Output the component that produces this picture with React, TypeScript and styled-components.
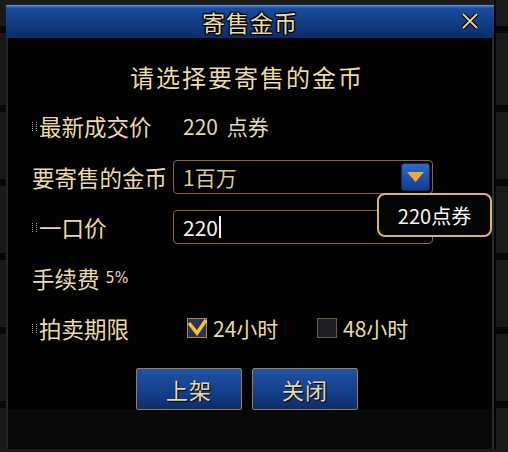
import { FC } from "react";
import styled, { createGlobalStyle } from "styled-components";

const GlobalStyle = createGlobalStyle`
	html {
		background-color: #0a0a0a;
		background-image:
			linear-gradient(to right, transparent 0 494px, #040404 494px 496px, transparent 496px),
			repeating-linear-gradient(to bottom, #1a1a1b 0 67px, #070707 67px 74px);
		background-position: 0 0, 0 38px;
		background-repeat: no-repeat, repeat;
	}
	body {
		margin: 0;
		padding: 5px 14px 0 6px;
		font-family: "Noto Sans CJK SC", "Noto Sans", sans-serif;
	}
	* {
		box-sizing: border-box;
	}
`;

const gold = "#eadaa6";

const Dialog = styled.div`
	width: 488px;
	height: 444px;
	display: flex;
	flex-direction: column;
	background: #040404;
`;

const TitleBar = styled.div`
	height: 33px;
	position: relative;
	display: flex;
	align-items: center;
	justify-content: center;
	background: linear-gradient(to bottom, #3a70c4 0, #1a4c9c 8%, #123d84 55%, #0b2c68 100%);
	border-top: 1px solid #5a8ad8;
`;

const Title = styled.h1`
	margin: 0;
	font-size: 23px;
	font-weight: 400;
	color: #ecdca4;
	letter-spacing: 1px;
	text-shadow: 0 0 2px #000, 1px 1px 1px #000, -1px -1px 1px #000, 1px -1px 1px #000,
		-1px 1px 1px #000;
`;

const Close = styled.span`
	position: absolute;
	right: 14px;
	top: 5px;
	width: 20px;
	height: 20px;
	display: flex;
	align-items: center;
	justify-content: center;
`;

const Body = styled.div`
	flex: 1;
	display: flex;
	flex-direction: column;
	padding: 13px 0 0 24px;
	border-left: 2px solid #262628;
	border-right: 2px solid #2a2a2c;
	background: linear-gradient(to bottom, #030303 0 371px, #090909 371px);
`;

const Subtitle = styled.div`
	height: 50px;
	display: flex;
	align-items: center;
	justify-content: center;
	padding-right: 30px;
	font-size: 24px;
	letter-spacing: 2px;
	color: ${gold};
	text-shadow: 1px 1px 1px #000;
`;

const Row = styled.div`
	height: 50.5px;
	display: flex;
	align-items: center;
	position: relative;
`;

const Label = styled.div`
	width: 141px;
	flex: none;
	display: flex;
	align-items: center;
	font-size: 22.5px;
	color: ${gold};
	white-space: nowrap;
	text-shadow: 1px 1px 1px #000;
`;

const Marker = styled.span`
	width: 5px;
	height: 9px;
	margin-right: 2px;
	border-left: 1px dotted #a8a08a;
	border-right: 1px dotted #a8a08a;
`;

const Value = styled.span`
	margin-left: 10px;
	font-size: 21px;
	color: #e2d8b8;
	word-spacing: 4px;
`;

const Small = styled.span`
	margin-left: 6px;
	font-family: "DejaVu Sans Condensed", "DejaVu Sans", sans-serif;
	font-size: 16px;
	color: #e2d8b8;
`;

const Field = styled.div`
	width: 260px;
	height: 34px;
	display: flex;
	align-items: center;
	justify-content: space-between;
	padding: 0 2px 0 9px;
	border: 1px solid #8a6638;
	border-radius: 4px;
	background: #020202;
	font-size: 21px;
`;

const SelectText = styled.span`
	color: #d8c69a;
`;

const InputText = styled.span`
	color: #f6f2ea;
	display: flex;
	align-items: center;
	&::after {
		content: "";
		width: 2px;
		height: 22px;
		margin-left: 1px;
		background: #f6f2ea;
	}
`;

const DropButton = styled.span`
	width: 29px;
	height: 28px;
	display: flex;
	align-items: center;
	justify-content: center;
	border-radius: 3px;
	background: linear-gradient(to bottom, #2e6ac6, #0f3c8e);
	border: 1px solid #0a2a66;
`;

const Tooltip = styled.div`
	position: absolute;
	left: 345px;
	top: -9px;
	width: 115px;
	height: 44px;
	display: flex;
	align-items: center;
	justify-content: center;
	border: 2px solid #d6b76c;
	border-radius: 8px;
	background: #040404;
	color: #f8f8f8;
	font-size: 20px;
`;

const Options = styled.div`
	display: flex;
	align-items: center;
	padding-left: 14px;
`;

const Option = styled.label`
	display: flex;
	align-items: center;
	gap: 6px;
	width: 130px;
	font-size: 21px;
	color: ${gold};
`;

const Box = styled.span<{ $checked?: boolean }>`
	width: 20px;
	height: 20px;
	position: relative;
	border: 1px solid ${({ $checked }) => ($checked ? "#b08a40" : "#6e5c40")};
	background: ${({ $checked }) => ($checked ? "#2c3158" : "#1e1e20")};
	svg {
		position: absolute;
		left: -1px;
		top: -1px;
	}
`;

const Buttons = styled.div`
	display: flex;
	justify-content: center;
	gap: 10px;
	margin-top: 14px;
	padding-right: 30px;
`;

const Button = styled.button`
	width: 106px;
	height: 42px;
	border: 1px solid #9c7c48;
	border-radius: 2px;
	background: linear-gradient(to bottom, #1f52a4 0, #164491 45%, #0b2d6c 100%);
	color: #e8d8a8;
	font-family: "Noto Sans CJK SC", sans-serif;
	font-size: 22px;
	letter-spacing: 1px;
	text-shadow: 1px 1px 1px #000;
	cursor: pointer;
`;

const App: FC = () => {
	return (
		<>
			<GlobalStyle />
			<Dialog>
				<TitleBar>
					<Title>寄售金币</Title>
					<Close>
						<svg width="18" height="16" viewBox="0 0 18 16">
							<path d="M2 1 L16 15 M16 1 L2 15" stroke="#000" strokeWidth="4" />
							<path d="M2 1 L16 15 M16 1 L2 15" stroke="#e8cf88" strokeWidth="2" />
						</svg>
					</Close>
				</TitleBar>
				<Body>
					<Subtitle>请选择要寄售的金币</Subtitle>
					<Row>
						<Label>
							<Marker />
							最新成交价
						</Label>
						<Value>220 点券</Value>
					</Row>
					<Row>
						<Label>要寄售的金币</Label>
						<Field>
							<SelectText>1百万</SelectText>
							<DropButton>
								<svg width="17" height="10" viewBox="0 0 17 10">
									<path d="M0 0 H17 L8.5 10 Z" fill="#f2a53a" />
								</svg>
							</DropButton>
						</Field>
					</Row>
					<Row>
						<Label>
							<Marker />
							一口价
						</Label>
						<Field>
							<InputText>220</InputText>
						</Field>
						<Tooltip>220点券</Tooltip>
					</Row>
					<Row>
						<Label>
							手续费<Small>5%</Small>
						</Label>
					</Row>
					<Row>
						<Label>
							<Marker />
							拍卖期限
						</Label>
						<Options>
							<Option>
								<Box $checked>
									<svg width="20" height="20" viewBox="0 0 20 20">
										<path d="M2 5 L10 15 L19 2" fill="none" stroke="#f2c428" strokeWidth="3.5" />
									</svg>
								</Box>
								24小时
							</Option>
							<Option>
								<Box />
								48小时
							</Option>
						</Options>
					</Row>
					<Buttons>
						<Button>上架</Button>
						<Button>关闭</Button>
					</Buttons>
				</Body>
			</Dialog>
		</>
	);
};

export default App;
